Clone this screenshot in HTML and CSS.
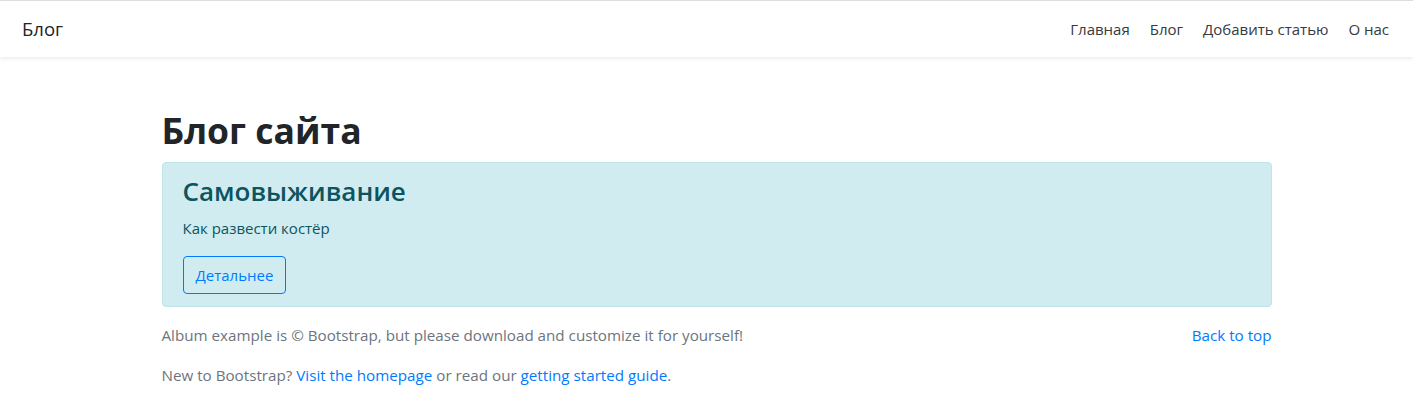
FILE: index.html
```html
<!DOCTYPE html>
<html lang="ru">
<head>
<meta charset="utf-8">
<title>Блог</title>
<link rel="stylesheet" href="styles.css">
</head>
<body>
<header class="navbar">
  <a class="brand" href="#">Блог</a>
  <nav class="nav">
    <a class="nav-link" href="#">Главная</a>
    <a class="nav-link" href="#">Блог</a>
    <a class="nav-link" href="#">Добавить статью</a>
    <a class="nav-link" href="#">О нас</a>
  </nav>
</header>
<main class="container main">
  <h1 class="title">Блог сайта</h1>
  <div class="alert">
    <h3 class="alert-heading">Самовыживание</h3>
    <p class="alert-text">Как развести костёр</p>
    <a class="btn" href="#">Детальнее</a>
  </div>
</main>
<footer class="container footer">
  <div class="footer-row">
    <p class="footer-p">Album example is © Bootstrap, but please download and customize it for yourself!</p>
    <a class="link" href="#">Back to top</a>
  </div>
  <p class="footer-p last">New to Bootstrap? <a class="link" href="#">Visit the homepage</a> or read our <a class="link" href="#">getting started guide</a>.</p>
</footer>
</body>
</html>
```
FILE: styles.css
```css
* { box-sizing: border-box; }
html, body { margin: 0; padding: 0; }
body {
  font-family: "Open Sans", "Noto Sans", sans-serif;
  font-size: 16px;
  line-height: 1.5;
  color: #212529;
  background: #fff;
  border-top: 1px solid #dcdde0;
}
a { text-decoration: none; }
.navbar {
  display: flex;
  align-items: center;
  justify-content: space-between;
  height: 56px;
  padding: 0 16px 0 22px;
  background: #fff;
  box-shadow: 0 2px 4px rgba(0,0,0,0.075);
  position: relative;
}
.brand { font-size: 18.5px; color: #212529; }
.nav { display: flex; }
.nav-link { color: #343a40; padding: 8px 10px; font-size: 15px; }
.nav-link:last-child { padding-right: 8px; }
.container { width: 1110px; margin-left: calc(50% - 545px); }
.main { padding-top: 49px; }
.title { font-size: 35.5px; font-weight: 700; line-height: 48px; margin: 0 0 8px; }
.alert {
  background: #d1ecf1;
  border: 1px solid #bee5eb;
  border-radius: 4px;
  color: #0c5460;
  padding: 12px 20px;
  margin-bottom: 16px;
}
.alert-heading { font-size: 26px; font-weight: 600; line-height: 33px; margin: 0 0 8px; color: #0c5460; }
.alert-text { margin: 0 0 16px; font-size: 15px; line-height: 24px; }
.btn {
  display: inline-block;
  color: #007bff;
  border: 1px solid #007bff;
  border-radius: 4px;
  padding: 6px 12px;
  font-size: 15px;
  line-height: 24px;
}
.footer { color: #6c757d; font-size: 15.2px; line-height: 24px; }
.footer-row { display: flex; justify-content: space-between; align-items: flex-start; }
.footer-p { margin: 0 0 16px; }
.footer-p.last { margin: 0; }
.link { color: #007bff; }
```
